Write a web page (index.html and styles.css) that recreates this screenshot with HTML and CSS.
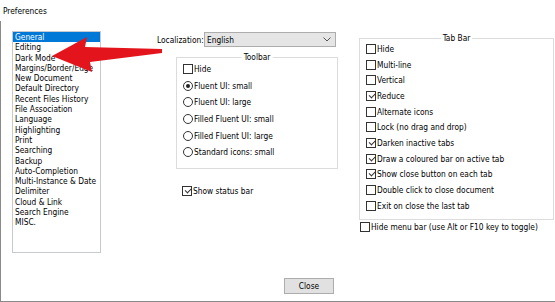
FILE: index.html
```html
<!DOCTYPE html>
<html lang="en">
<head>
    <meta charset="UTF-8">
    <title>Preferences</title>
    <link rel="stylesheet" href="styles.css">
</head>
<body>
    <div class="dialog">
        <div class="title">Preferences</div>
        <div class="frame">
            <div class="panes">
                <ul class="pages">
                    <li class="selected">General</li>
                    <li>Editing</li>
                    <li>Dark Mode</li>
                    <li>Margins/Border/Edge</li>
                    <li>New Document</li>
                    <li>Default Directory</li>
                    <li>Recent Files History</li>
                    <li>File Association</li>
                    <li>Language</li>
                    <li>Highlighting</li>
                    <li>Print</li>
                    <li>Searching</li>
                    <li>Backup</li>
                    <li>Auto-Completion</li>
                    <li>Multi-Instance &amp; Date</li>
                    <li>Delimiter</li>
                    <li>Cloud &amp; Link</li>
                    <li>Search Engine</li>
                    <li>MISC.</li>
                </ul>

                <div class="mid">
                    <div class="loc">
                        <span class="loc-label">Localization:</span>
                        <div class="combo">
                            <span>English</span>
                            <svg class="chevron" width="8" height="5" viewBox="0 0 8 5"><path d="M0.5 0.5 L4 4 L7.5 0.5" fill="none" stroke="#555" stroke-width="1"/></svg>
                        </div>
                    </div>
                    <div class="group toolbar">
                        <span class="group-title">Toolbar</span>
                        <div class="opt"><span class="cb"></span>Hide</div>
                        <div class="opt"><span class="rb on"></span>Fluent UI: small</div>
                        <div class="opt"><span class="rb"></span>Fluent UI: large</div>
                        <div class="opt"><span class="rb"></span>Filled Fluent UI: small</div>
                        <div class="opt"><span class="rb"></span>Filled Fluent UI: large</div>
                        <div class="opt"><span class="rb"></span>Standard icons: small</div>
                    </div>
                    <div class="opt status"><span class="cb on"></span>Show status bar</div>
                </div>

                <div class="right">
                    <div class="group tabbar">
                        <span class="group-title">Tab Bar</span>
                        <div class="opt"><span class="cb"></span>Hide</div>
                        <div class="opt"><span class="cb"></span>Multi-line</div>
                        <div class="opt"><span class="cb"></span>Vertical</div>
                        <div class="opt"><span class="cb on"></span>Reduce</div>
                        <div class="opt"><span class="cb"></span>Alternate icons</div>
                        <div class="opt"><span class="cb"></span>Lock (no drag and drop)</div>
                        <div class="opt"><span class="cb on"></span>Darken inactive tabs</div>
                        <div class="opt"><span class="cb on"></span>Draw a coloured bar on active tab</div>
                        <div class="opt"><span class="cb on"></span>Show close button on each tab</div>
                        <div class="opt"><span class="cb"></span>Double click to close document</div>
                        <div class="opt"><span class="cb"></span>Exit on close the last tab</div>
                    </div>
                    <div class="opt menubar"><span class="cb"></span>Hide menu bar (use Alt or F10 key to toggle)</div>
                </div>
            </div>
            <div class="footer">
                <button class="btn">Close</button>
            </div>
        </div>
        <svg class="arrow" width="555" height="302" viewBox="0 0 555 302">
            <polygon points="52,56 87,37 85,47 162,49 162,53 90,62 92,72" fill="#e3141b"/>
        </svg>
    </div>
</body>
</html>
```

FILE: styles.css
```css
body {
    margin: 0;
    background: #ffffff;
    color: #000000;
    font-family: "DejaVu Sans Condensed", "DejaVu Sans", sans-serif;
    font-size: 8.3px;
}
.dialog {
    position: relative;
    width: 555px;
    height: 302px;
    overflow: hidden;
}
.title {
    height: 21px;
    box-sizing: border-box;
    padding: 6px 0 0 3px;
    line-height: 10px;
}
.frame {
    height: 281px;
    box-sizing: border-box;
    border-left: 1px solid #8a8a8a;
    border-bottom: 1px solid #8a8a8a;
}
.panes {
    display: flex;
    align-items: flex-start;
    padding: 10px 0 0 11px;
}
.pages {
    list-style: none;
    margin: 0;
    padding: 0;
    width: 89px;
    height: 222px;
    box-sizing: border-box;
    border: 1px solid #c6c9ce;
    line-height: 10.3px;
    flex: none;
}
.pages li {
    padding-left: 2px;
    white-space: nowrap;
}
.pages li.selected {
    background: #0078d7;
    color: #ffffff;
}
.mid {
    margin-left: 56px;
    width: 181px;
    padding-top: 1px;
    flex: none;
}
.loc {
    display: flex;
    align-items: center;
    height: 15px;
}
.loc-label {
    width: 47px;
}
.combo {
    width: 132px;
    height: 15px;
    box-sizing: border-box;
    border: 1px solid #adadad;
    background: #e5e5e5;
    display: flex;
    align-items: center;
    justify-content: space-between;
    padding: 0 4px 0 2px;
}
.group {
    position: relative;
    box-sizing: border-box;
    border: 1px solid #dcdcdc;
    padding: 0 6px;
}
.group-title {
    position: absolute;
    top: -6px;
    left: 50%;
    transform: translateX(-50%);
    background: #ffffff;
    padding: 0 2px;
    line-height: 10px;
}
.toolbar {
    margin: 10px 0 0 19px;
    width: 162px;
    height: 112px;
    padding-top: 3px;
}
.toolbar .opt {
    height: 16.6px;
}
.opt {
    display: flex;
    align-items: center;
    white-space: nowrap;
}
.status {
    margin: 14px 0 0 25px;
    height: 16px;
}
.right {
    margin: 7px 0 0 21px;
    flex: none;
}
.tabbar {
    width: 195px;
    height: 182px;
    padding-top: 2px;
}
.tabbar .opt {
    height: 15.7px;
}
.menubar {
    margin-left: 1px;
    height: 14px;
}
.cb,
.rb {
    position: relative;
    flex: none;
    width: 10px;
    height: 10px;
    box-sizing: border-box;
    border: 1px solid #333333;
    background: #ffffff;
    margin-right: 1px;
}
.rb {
    border-radius: 50%;
}
.cb.on::after {
    content: "";
    position: absolute;
    left: 1.5px;
    top: 1px;
    width: 5px;
    height: 2.5px;
    border-left: 1px solid #333333;
    border-bottom: 1px solid #333333;
    transform: rotate(-45deg);
}
.rb.on::after {
    content: "";
    position: absolute;
    left: 2px;
    top: 2px;
    width: 4px;
    height: 4px;
    border-radius: 50%;
    background: #222222;
}
.footer {
    margin-top: 25px;
    padding-left: 283px;
}
.btn {
    display: block;
    width: 50px;
    height: 16px;
    padding: 0;
    border: 1px solid #adadad;
    background: #e1e1e1;
    font: inherit;
    color: #000000;
}
.arrow {
    position: absolute;
    top: 0;
    left: 0;
    pointer-events: none;
}
```
